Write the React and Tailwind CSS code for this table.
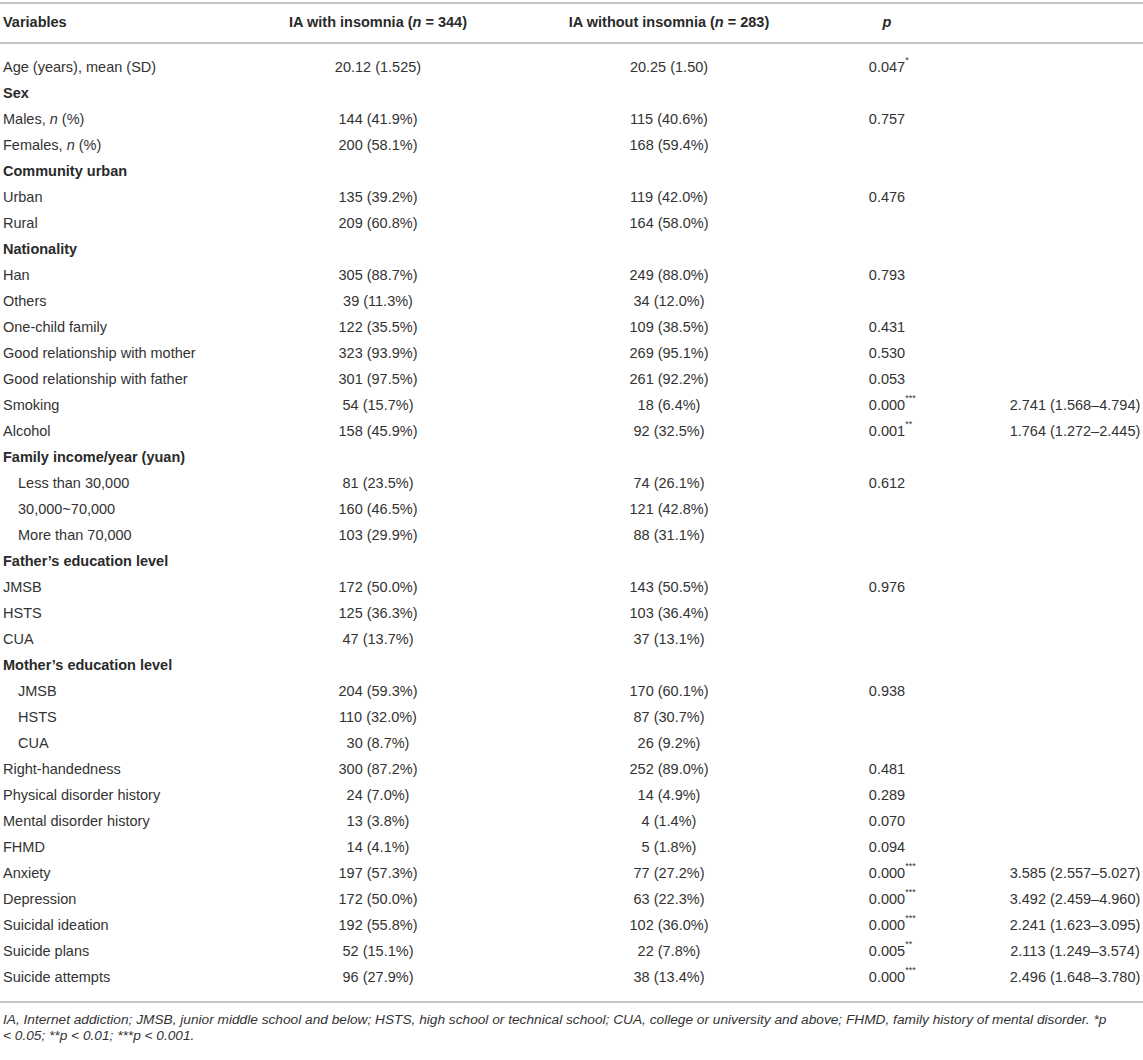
const rows = [
  { label: 'Age (years), mean (SD)', a: '20.12 (1.525)', b: '20.25 (1.50)', p: '0.047', s: '*' },
  { label: 'Sex', head: true },
  { label: <>Males, <i>n</i> (%)</>, a: '144 (41.9%)', b: '115 (40.6%)', p: '0.757' },
  { label: <>Females, <i>n</i> (%)</>, a: '200 (58.1%)', b: '168 (59.4%)' },
  { label: 'Community urban', head: true },
  { label: 'Urban', a: '135 (39.2%)', b: '119 (42.0%)', p: '0.476' },
  { label: 'Rural', a: '209 (60.8%)', b: '164 (58.0%)' },
  { label: 'Nationality', head: true },
  { label: 'Han', a: '305 (88.7%)', b: '249 (88.0%)', p: '0.793' },
  { label: 'Others', a: '39 (11.3%)', b: '34 (12.0%)' },
  { label: 'One-child family', a: '122 (35.5%)', b: '109 (38.5%)', p: '0.431' },
  { label: 'Good relationship with mother', a: '323 (93.9%)', b: '269 (95.1%)', p: '0.530' },
  { label: 'Good relationship with father', a: '301 (97.5%)', b: '261 (92.2%)', p: '0.053' },
  { label: 'Smoking', a: '54 (15.7%)', b: '18 (6.4%)', p: '0.000', s: '***', or: '2.741 (1.568–4.794)' },
  { label: 'Alcohol', a: '158 (45.9%)', b: '92 (32.5%)', p: '0.001', s: '**', or: '1.764 (1.272–2.445)' },
  { label: 'Family income/year (yuan)', head: true },
  { label: 'Less than 30,000', sub: true, a: '81 (23.5%)', b: '74 (26.1%)', p: '0.612' },
  { label: '30,000~70,000', sub: true, a: '160 (46.5%)', b: '121 (42.8%)' },
  { label: 'More than 70,000', sub: true, a: '103 (29.9%)', b: '88 (31.1%)' },
  { label: 'Father’s education level', head: true },
  { label: 'JMSB', a: '172 (50.0%)', b: '143 (50.5%)', p: '0.976' },
  { label: 'HSTS', a: '125 (36.3%)', b: '103 (36.4%)' },
  { label: 'CUA', a: '47 (13.7%)', b: '37 (13.1%)' },
  { label: 'Mother’s education level', head: true },
  { label: 'JMSB', sub: true, a: '204 (59.3%)', b: '170 (60.1%)', p: '0.938' },
  { label: 'HSTS', sub: true, a: '110 (32.0%)', b: '87 (30.7%)' },
  { label: 'CUA', sub: true, a: '30 (8.7%)', b: '26 (9.2%)' },
  { label: 'Right-handedness', a: '300 (87.2%)', b: '252 (89.0%)', p: '0.481' },
  { label: 'Physical disorder history', a: '24 (7.0%)', b: '14 (4.9%)', p: '0.289' },
  { label: 'Mental disorder history', a: '13 (3.8%)', b: '4 (1.4%)', p: '0.070' },
  { label: 'FHMD', a: '14 (4.1%)', b: '5 (1.8%)', p: '0.094' },
  { label: 'Anxiety', a: '197 (57.3%)', b: '77 (27.2%)', p: '0.000', s: '***', or: '3.585 (2.557–5.027)' },
  { label: 'Depression', a: '172 (50.0%)', b: '63 (22.3%)', p: '0.000', s: '***', or: '3.492 (2.459–4.960)' },
  { label: 'Suicidal ideation', a: '192 (55.8%)', b: '102 (36.0%)', p: '0.000', s: '***', or: '2.241 (1.623–3.095)' },
  { label: 'Suicide plans', a: '52 (15.1%)', b: '22 (7.8%)', p: '0.005', s: '**', or: '2.113 (1.249–3.574)' },
  { label: 'Suicide attempts', a: '96 (27.9%)', b: '38 (13.4%)', p: '0.000', s: '***', or: '2.496 (1.648–3.780)' },
];

const cols = 'grid grid-cols-[280px_196px_386px_50px_326px]';

export default function App() {
  return (
    <div className="w-full min-h-[1060px] overflow-hidden bg-white pt-[2px] text-[14.5px] text-[#333333] font-['Liberation_Sans',Arial,sans-serif]">
      <div className="w-[1238px]">
        {/* header */}
        <div className={`${cols} h-[42px] items-center border-y-2 border-[#c6c6c6] font-bold text-[#2a2a2a] whitespace-nowrap`}>
          <div className="pl-[3px]">Variables</div>
          <div className="text-center">IA with insomnia (<i>n</i> = 344)</div>
          <div className="text-center">IA without insomnia (<i>n</i> = 283)</div>
          <div className="text-center"><i>p</i></div>
          <div></div>
        </div>

        <div className="pt-[11px] pb-[10px] border-b-2 border-[#c6c6c6]">
          {rows.map((r, i) => (
            <div key={i} className={`${cols} h-[26px] items-center whitespace-nowrap`}>
              <div className={`${r.sub ? 'pl-[18px]' : 'pl-[3px]'} ${r.head ? 'font-bold text-[#2a2a2a]' : ''}`}>{r.label}</div>
              <div className="text-center">{r.a}</div>
              <div className="text-center">{r.b}</div>
              <div className="text-center">
                {r.p && (
                  <span className="relative">
                    {r.p}
                    {r.s && <sup className="absolute left-full top-[-3px] text-[9px] leading-none">{r.s}</sup>}
                  </span>
                )}
              </div>
              <div className="text-center">{r.or}</div>
            </div>
          ))}
        </div>

        <p className="pt-[9px] pl-[3px] text-[13.7px] leading-[16px] italic whitespace-nowrap">
          IA, Internet addiction; JMSB, junior middle school and below; HSTS, high school or technical school; CUA, college or university and above; FHMD, family history of mental disorder. *p
          <br />
          &lt; 0.05; **p &lt; 0.01; ***p &lt; 0.001.
        </p>
      </div>
    </div>
  );
}
